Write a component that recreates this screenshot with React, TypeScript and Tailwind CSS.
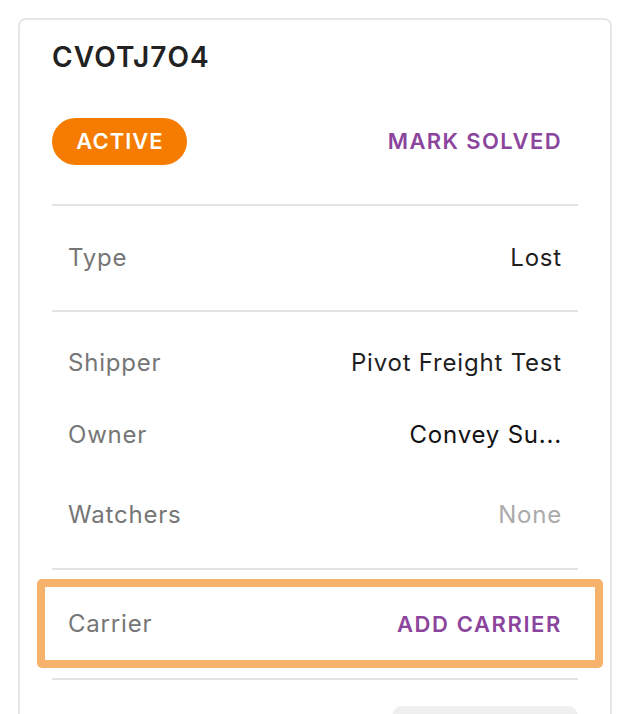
import React from "react";

const font = { fontFamily: "Inter, Lato, 'Liberation Sans', sans-serif" };

function Row({
  label,
  value,
  valueClass,
  h,
}: {
  label: string;
  value: React.ReactNode;
  valueClass?: string;
  h: string;
}) {
  return (
    <div className={`flex items-center justify-between pl-[16px] pr-[16px] ${h}`}>
      <span className="text-[24px] tracking-[0.8px] text-[#767676]">{label}</span>
      <span className={`text-[24px] tracking-[0.8px] ${valueClass ?? "text-[#1f1f1f]"}`}>{value}</span>
    </div>
  );
}

function Divider() {
  return <div className="h-[2px] bg-[#e3e3e3]" />;
}

export default function App() {
  return (
    <div className="min-h-screen bg-white p-[18px]" style={font}>
      <div className="rounded-[8px] border-2 border-[#e6e6e6] bg-white px-[32px] pb-[40px]">
        <div className="pt-[19px]">
          <h1 className="text-[28px] font-semibold leading-[36px] tracking-[1.1px] text-[#222222]">
            CVOTJ7O4
          </h1>
        </div>
        <div className="mt-[43px] mb-[39px] flex items-center justify-between">
          <span className="flex h-[47px] w-[135px] items-center justify-center rounded-full bg-[#f57c00] pl-[1px] text-[22px] font-semibold tracking-[1px] text-white">
            ACTIVE
          </span>
          <button className="mr-[16px] text-[22px] font-semibold tracking-[1.4px] text-[#8b459d]">
            MARK SOLVED
          </button>
        </div>
        <Divider />
        <Row label="Type" value="Lost" h="h-[104px]" />
        <Divider />
        <div className="pt-[15px] pb-[9px]">
          <Row label="Shipper" value="Pivot Freight Test" h="h-[72px]" />
          <Row label="Owner" value="Convey Su..." h="h-[72px]" valueClass="text-[#111111]" />
          <Row label="Watchers" value="None" h="h-[88px]" valueClass="text-[#ababab]" />
        </div>
        <Divider />
        <div className="relative">
          <div className="flex h-[108px] items-center justify-between pl-[16px] pr-[16px]">
            <span className="text-[24px] tracking-[0.8px] text-[#767676]">Carrier</span>
            <button className="text-[22px] font-semibold tracking-[1.6px] text-[#8b459d]">
              ADD CARRIER
            </button>
          </div>
          <div className="pointer-events-none absolute top-[9px] bottom-[10px] left-[-15px] right-[-25px] rounded-[5px] border-[8px] border-[#f6b26b]" />
        </div>
        <Divider />
        <div className="mt-[26px] flex justify-end">
          <div className="h-[44px] w-[186px] rounded-[10px] bg-[#efefef]" />
        </div>
      </div>
    </div>
  );
}
